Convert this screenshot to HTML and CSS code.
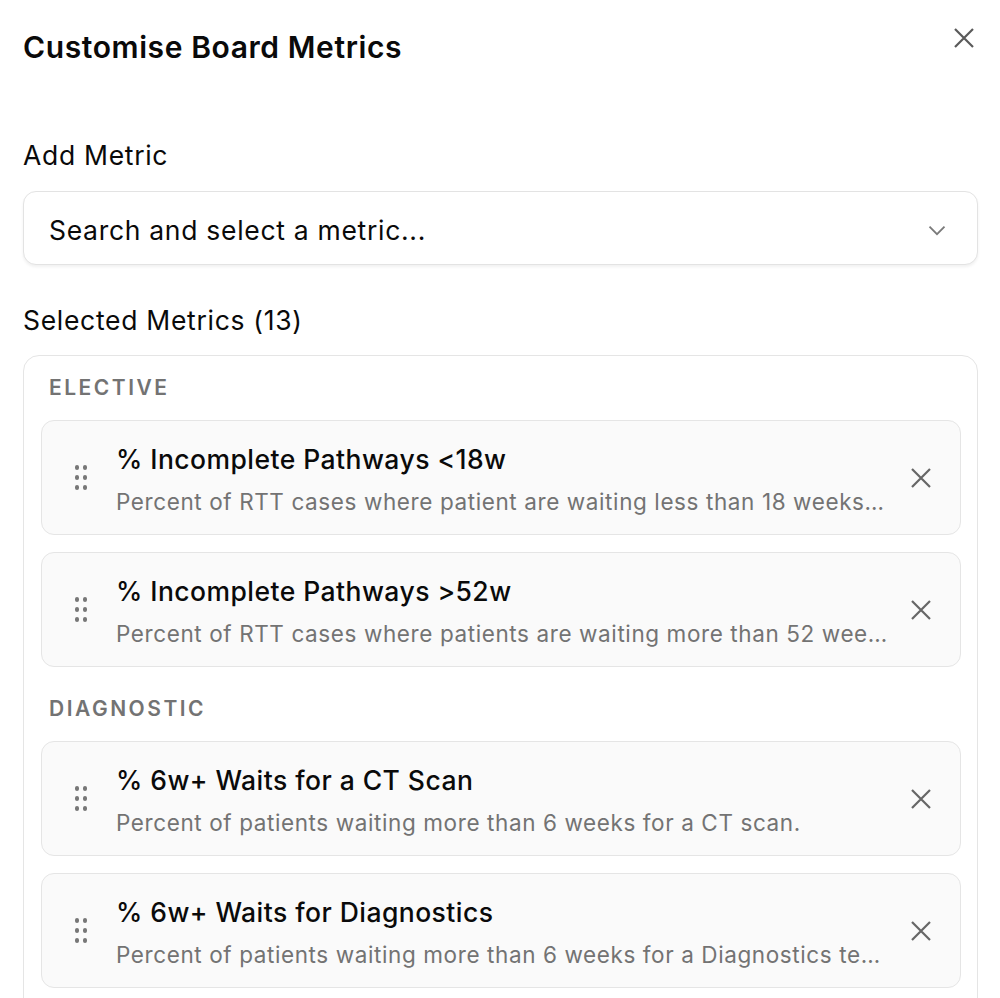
FILE: index.html
```html
<!DOCTYPE html>
<html lang="en">
<head>
<meta charset="utf-8">
<title>Customise Board Metrics</title>
<link rel="stylesheet" href="styles.css">
</head>
<body>
<div class="panel">
  <header class="header">
    <h1 class="title">Customise Board Metrics</h1>
    <button class="close" aria-label="Close">
      <svg viewBox="0 0 20 20" width="20" height="20"><path d="M1 1L19 19M19 1L1 19"/></svg>
    </button>
  </header>

  <div class="field-label">Add Metric</div>
  <div class="select">
    <span class="select-text">Search and select a metric...</span>
    <svg class="chevron" viewBox="0 0 24 24" width="24" height="24"><path d="M3 8L12 17L21 8"/></svg>
  </div>

  <div class="field-label selected-label">Selected Metrics (13)</div>
  <div class="metrics-box">
    <section class="group">
      <div class="group-label">Elective</div>
      <div class="card">
        <span class="handle"><i></i><i></i><i></i><i></i><i></i><i></i></span>
        <div class="card-body">
          <div class="card-title">% Incomplete Pathways &lt;18w</div>
          <div class="card-desc">Percent of RTT cases where patient are waiting less than 18 weeks for treatment.</div>
        </div>
        <button class="remove" aria-label="Remove"><svg viewBox="0 0 20 20" width="20" height="20"><path d="M1 1L19 19M19 1L1 19"/></svg></button>
      </div>
      <div class="card">
        <span class="handle"><i></i><i></i><i></i><i></i><i></i><i></i></span>
        <div class="card-body">
          <div class="card-title">% Incomplete Pathways &gt;52w</div>
          <div class="card-desc">Percent of RTT cases where patients are waiting more than 52 weeks for treatment.</div>
        </div>
        <button class="remove" aria-label="Remove"><svg viewBox="0 0 20 20" width="20" height="20"><path d="M1 1L19 19M19 1L1 19"/></svg></button>
      </div>
    </section>
    <section class="group">
      <div class="group-label">Diagnostic</div>
      <div class="card">
        <span class="handle"><i></i><i></i><i></i><i></i><i></i><i></i></span>
        <div class="card-body">
          <div class="card-title">% 6w+ Waits for a CT Scan</div>
          <div class="card-desc">Percent of patients waiting more than 6 weeks for a CT scan.</div>
        </div>
        <button class="remove" aria-label="Remove"><svg viewBox="0 0 20 20" width="20" height="20"><path d="M1 1L19 19M19 1L1 19"/></svg></button>
      </div>
      <div class="card">
        <span class="handle"><i></i><i></i><i></i><i></i><i></i><i></i></span>
        <div class="card-body">
          <div class="card-title">% 6w+ Waits for Diagnostics</div>
          <div class="card-desc">Percent of patients waiting more than 6 weeks for a Diagnostics test across all modalities.</div>
        </div>
        <button class="remove" aria-label="Remove"><svg viewBox="0 0 20 20" width="20" height="20"><path d="M1 1L19 19M19 1L1 19"/></svg></button>
      </div>
      <div class="card">
        <span class="handle"><i></i><i></i><i></i><i></i><i></i><i></i></span>
        <div class="card-body">
          <div class="card-title">% 6w+ Waits for an MRI Scan</div>
          <div class="card-desc">Percent of patients waiting more than 6 weeks for an MRI scan.</div>
        </div>
        <button class="remove" aria-label="Remove"><svg viewBox="0 0 20 20" width="20" height="20"><path d="M1 1L19 19M19 1L1 19"/></svg></button>
      </div>
    </section>
  </div>
</div>
</body>
</html>
```

FILE: styles.css
```css
* { box-sizing: border-box; }

html, body {
  margin: 0;
  padding: 0;
  background: #ffffff;
}

body {
  font-family: Inter, "Noto Sans", "Liberation Sans", sans-serif;
  color: #0a0a0a;
}

.panel {
  padding: 29px 22px 40px 23px;
  display: flex;
  flex-direction: column;
}

.header {
  display: flex;
  justify-content: space-between;
  align-items: flex-start;
}

.title {
  margin: 0;
  font-size: 30px;
  line-height: 36px;
  font-weight: 600;
  letter-spacing: 0.6px;
}

.close {
  border: 0;
  background: none;
  padding: 0;
  margin: -5px 0 0 0;
  width: 28px;
  height: 28px;
  display: flex;
  align-items: center;
  justify-content: center;
  cursor: pointer;
}

.close svg, .remove svg {
  width: 20px;
  height: 20px;
  fill: none;
  stroke: #5a5a5a;
  stroke-width: 2.2;
  stroke-linecap: butt;
}

.field-label {
  margin-top: 74px;
  font-size: 26.5px;
  line-height: 32px;
  font-weight: 400;
  letter-spacing: 0.7px;
}

.selected-label {
  margin-top: 39px;
}

.select {
  margin-top: 20px;
  height: 74px;
  border: 1.5px solid #e3e3e3;
  border-radius: 13px;
  box-shadow: 0 2px 3px rgba(0, 0, 0, 0.06);
  display: flex;
  align-items: center;
  justify-content: space-between;
  padding: 3px 30px 0 25px;
  background: #fff;
}

.select-text {
  font-size: 26.5px;
  line-height: 32px;
  letter-spacing: 0.7px;
}

.chevron {
  width: 20px;
  height: 20px;
  fill: none;
  stroke: #7a7a7a;
  stroke-width: 2.2;
}

.metrics-box {
  margin-top: 19px;
  border: 1.5px solid #e5e5e5;
  border-radius: 16px;
  padding: 18px 16px 18px 17px;
  display: flex;
  flex-direction: column;
  gap: 28px;
}

.group {
  display: flex;
  flex-direction: column;
  gap: 17px;
}

.group-label {
  padding-left: 8px;
  font-size: 21px;
  line-height: 28px;
  font-weight: 600;
  letter-spacing: 2.5px;
  text-transform: uppercase;
  color: #737373;
  margin-bottom: 1px;
}

.card {
  background: #fafafa;
  border: 1.5px solid #e5e5e5;
  border-radius: 13px;
  height: 115px;
  display: flex;
  align-items: center;
  padding: 0 25.5px 0 32.5px;
}

.handle {
  display: grid;
  grid-template-columns: repeat(2, 4.5px);
  grid-auto-rows: 4.5px;
  column-gap: 3.5px;
  row-gap: 5.5px;
  margin-right: 29px;
  flex-shrink: 0;
}

.handle i {
  display: block;
  width: 4.5px;
  height: 4.5px;
  border-radius: 50%;
  background: #777;
}

.card-body {
  flex: 1;
  min-width: 0;
  display: flex;
  flex-direction: column;
  padding-top: 3px;
}

.card-title {
  font-size: 26.5px;
  line-height: 34px;
  font-weight: 500;
  letter-spacing: 0.45px;
  color: #0a0a0a;
}

.card-desc {
  margin-top: 11px;
  font-size: 22.5px;
  line-height: 30px;
  letter-spacing: 0.6px;
  color: #737373;
  white-space: nowrap;
  overflow: hidden;
  text-overflow: ellipsis;
}

.remove {
  border: 0;
  background: none;
  padding: 0;
  margin-left: 18px;
  width: 28px;
  height: 28px;
  display: flex;
  align-items: center;
  justify-content: center;
  flex-shrink: 0;
  cursor: pointer;
}

.remove svg {
  stroke: #666;
}
```
